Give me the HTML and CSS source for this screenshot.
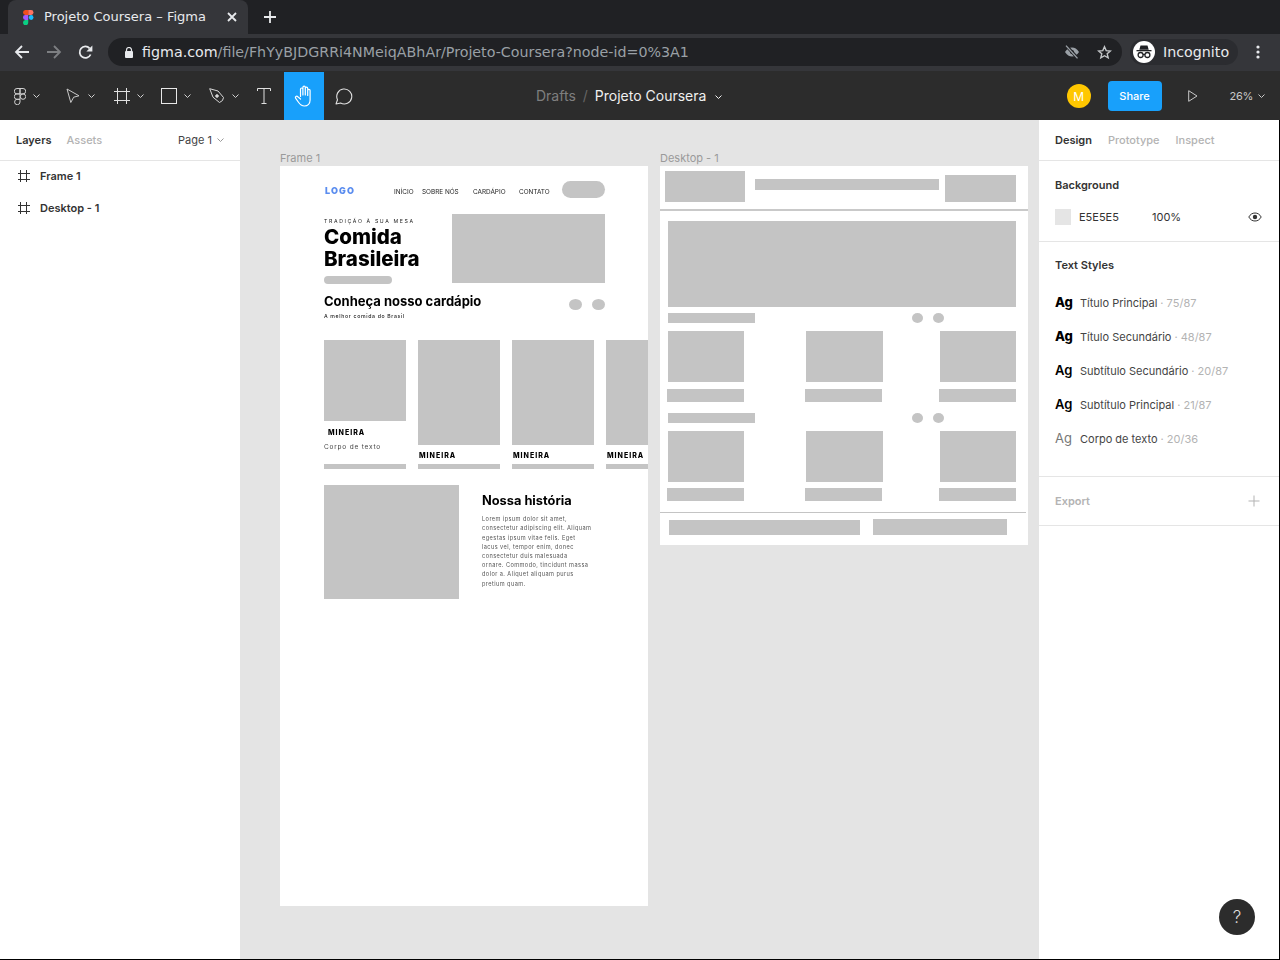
FILE: index.html
```html
<!DOCTYPE html>
<html lang="pt">
<head>
<meta charset="utf-8">
<title>Projeto Coursera – Figma</title>
<link rel="stylesheet" href="styles.css">
</head>
<body>
<div class="window">
  <header class="tabstrip">
    <div class="tab">
      <svg class="favicon" width="10.500" height="15" viewBox="0 0 12 16" preserveAspectRatio="none"><path d="M0 2.700A2.700 2.700 0 0 1 2.700 0H6v5.300H2.700A2.700 2.700 0 0 1 0 2.700z" fill="#f24e1e"/><path d="M6 0h3.300a2.650 2.650 0 0 1 0 5.300H6z" fill="#ff7262"/><path d="M0 8a2.650 2.650 0 0 1 2.700-2.700H6v5.300H2.700A2.650 2.650 0 0 1 0 8z" fill="#a259ff"/><circle cx="9.300" cy="8" r="2.650" fill="#1abcfe"/><path d="M0 13.300a2.700 2.700 0 0 1 2.700-2.700H6v2.700a3 3 0 0 1-6 0z" fill="#0acf83"/></svg>
      <span class="tab-title">Projeto Coursera – Figma</span>
      <svg class="tab-close" width="10" height="10" viewBox="0 0 10 10"><path d="M1 1l8 8M9 1l-8 8" stroke="#e8eaed" stroke-width="1.800"/></svg>
    </div>
    <svg class="new-tab" width="12" height="12" viewBox="0 0 12 12"><path d="M6 0v12M0 6h12" stroke="#e8eaed" stroke-width="1.800"/></svg>
  </header>

  <div class="chrome-bar">
    <svg class="nav-icon" width="16" height="14" viewBox="0 0 16 14"><path d="M15 7H2M8 1L2 7l6 6" fill="none" stroke="#e8eaed" stroke-width="1.800"/></svg>
    <svg class="nav-icon forward" width="16" height="14" viewBox="0 0 16 14"><path d="M1 7h13M8 1l6 6-6 6" fill="none" stroke="#7d7f82" stroke-width="1.800"/></svg>
    <svg class="nav-icon reload" width="15" height="15" viewBox="0 0 15 15"><path d="M12.600 9.500A5.700 5.700 0 1 1 11.600 3.300" fill="none" stroke="#e8eaed" stroke-width="1.800"/><path d="M14.400 0.600v6h-6z" fill="#e8eaed"/></svg>
    <div class="omnibox">
      <svg class="lock" width="8" height="11" viewBox="0 0 8 11"><path d="M1.500 4.500V3a2.500 2.500 0 0 1 5 0v1.500" fill="none" stroke="#e8eaed" stroke-width="1.200"/><rect y="4" width="8" height="7" rx="1" fill="#e8eaed"/></svg>
      <span class="url"><span class="host">figma.com</span>/file/FhYyBJDGRRi4NMeiqABhAr/Projeto-Coursera?node-id=0%3A1</span>
      <svg class="eye-off" width="16" height="14" viewBox="0 0 16 14"><path d="M1 7c2-3.300 4.300-4.600 7-4.600S13 3.700 15 7c-2 3.300-4.300 4.600-7 4.600S3 10.300 1 7z" fill="#9aa0a6"/><circle cx="8" cy="7" r="2" fill="#202124"/><path d="M2.500 1l11 12" stroke="#202124" stroke-width="3.200"/><path d="M2 .6l11.500 12.800" stroke="#9aa0a6" stroke-width="1.400"/></svg>
      <svg class="star" width="15" height="15" viewBox="0 0 15 15"><path d="M7.500 1.700l1.700 3.900 4.200.4-3.200 2.800 1 4.100-3.700-2.200-3.700 2.200 1-4.100L1.600 6l4.200-.4z" fill="none" stroke="#c4c7c9" stroke-width="1.400"/></svg>
    </div>
    <div class="incognito">
      <span class="incognito-badge">
        <svg width="16" height="14" viewBox="0 0 16 14"><path d="M4.500 0.500h7l1.200 4.300H3.300z" fill="#202124"/><rect x="0.500" y="5" width="15" height="1.300" fill="#202124"/><circle cx="4.600" cy="10" r="2.500" fill="none" stroke="#202124" stroke-width="1.300"/><circle cx="11.400" cy="10" r="2.500" fill="none" stroke="#202124" stroke-width="1.300"/><path d="M7 9.500h2" stroke="#202124" stroke-width="1.200"/></svg>
      </span>
      <span>Incognito</span>
    </div>
    <svg class="kebab" width="4" height="14" viewBox="0 0 4 14"><circle cx="2" cy="2" r="1.600" fill="#e8eaed"/><circle cx="2" cy="7" r="1.600" fill="#e8eaed"/><circle cx="2" cy="12" r="1.600" fill="#e8eaed"/></svg>
  </div>

  <div class="figma-bar">
    <div class="tools">
      <div class="tool t-main">
        <svg width="12" height="17" viewBox="0 0 12 17" fill="none" stroke="#d0d0d0" stroke-width="1"><path d="M6 .5H3a2.700 2.700 0 0 0 0 5.400h3zM6 .5h3a2.700 2.700 0 0 1 0 5.400H6zM6 5.900H3a2.700 2.700 0 0 0 0 5.400h3z"/><circle cx="9" cy="8.600" r="2.700"/><path d="M6 11.300H3a2.700 2.700 0 1 0 3 2.700z"/></svg>
        <svg class="caret" width="7" height="4" viewBox="0 0 7 4"><path d="M.5.500l3 3 3-3" fill="none" stroke="#d0d0d0"/></svg>
      </div>
      <div class="tool t-move">
        <svg width="14" height="16" viewBox="0 0 14 16"><path d="M1 1l12 6.800-5.300 1.400L4.800 14.500z" fill="none" stroke="#c8c8c8" stroke-width="1"/></svg>
        <svg class="caret caret-move" width="7" height="4" viewBox="0 0 7 4"><path d="M.5.500l3 3 3-3" fill="none" stroke="#d0d0d0"/></svg>
      </div>
      <div class="tool t-frame">
        <svg width="16" height="16" viewBox="0 0 16 16"><path d="M3.500 0v16M12.500 0v16M0 3.500h16M0 12.500h16" stroke="#e0e0e0" stroke-width="1"/></svg>
        <svg class="caret" width="7" height="4" viewBox="0 0 7 4"><path d="M.5.500l3 3 3-3" fill="none" stroke="#d0d0d0"/></svg>
      </div>
      <div class="tool t-rect">
        <svg width="16" height="16" viewBox="0 0 16 16"><rect x=".5" y=".5" width="15" height="15" fill="none" stroke="#e8e8e8"/></svg>
        <svg class="caret" width="7" height="4" viewBox="0 0 7 4"><path d="M.5.500l3 3 3-3" fill="none" stroke="#d0d0d0"/></svg>
      </div>
      <div class="tool t-pen">
        <svg width="16" height="16" viewBox="0 0 16 16" fill="none" stroke="#d8d8d8"><path d="M.7.700l8.300 2.300 5.500 6.500-1 3-3 2-6.500-5.300z"/><circle cx="8" cy="8" r="1.300" fill="#d8d8d8"/></svg>
        <svg class="caret" width="7" height="4" viewBox="0 0 7 4"><path d="M.5.500l3 3 3-3" fill="none" stroke="#d0d0d0"/></svg>
      </div>
      <div class="tool t-text">
        <svg width="14" height="16" viewBox="0 0 14 16" fill="none" stroke="#e0e0e0"><path d="M.5 3V.5h13V3M7 .5v15M4.500 15.500h5"/></svg>
      </div>
      <div class="tool t-hand">
        <svg width="20" height="22" viewBox="0 0 20 22" fill="none" stroke="#fff" stroke-width="1.200" stroke-linecap="round" stroke-linejoin="round"><path d="M6.500 11.500V4.200a1.200 1.200 0 0 1 2.400 0V10M8.900 10V2.400a1.200 1.200 0 0 1 2.400 0V10M11.300 10V3.400a1.200 1.200 0 0 1 2.400 0V10.500M13.700 10.500V5.600a1.200 1.200 0 0 1 2.400 0v9.400c0 3.500-2.400 6-5.600 6-3 0-4.500-1.400-6.200-4L1.600 13.200c-.8-1.400 1-2.600 2.200-1.500l2.700 2.300"/></svg>
      </div>
      <div class="tool t-comment">
        <svg width="18" height="17" viewBox="0 0 18 17" fill="none" stroke="#e0e0e0" stroke-width="1.100"><path d="M1 16l1.500-4.300A7.500 7.500 0 1 1 5.600 15z" stroke-linejoin="round"/></svg>
      </div>
    </div>
    <div class="crumbs">
      <span class="crumb-dim">Drafts</span>
      <span class="crumb-slash">/</span>
      <span class="crumb-name">Projeto Coursera</span>
      <svg class="crumb-caret" width="7" height="4" viewBox="0 0 7 4"><path d="M.5.500l3 3 3-3" fill="none" stroke="#f0f0f0"/></svg>
    </div>
    <div class="bar-right">
      <span class="avatar">M</span>
      <span class="share">Share</span>
      <svg class="play" width="10" height="12" viewBox="0 0 10 12"><path d="M.7.700v10.600L9 6z" fill="none" stroke="#c8c8c8"/></svg>
      <span class="zoom-label">26%</span>
      <svg class="caret zoom-caret" width="7" height="4" viewBox="0 0 7 4"><path d="M.5.500l3 3 3-3" fill="none" stroke="#c8c8c8"/></svg>
    </div>
  </div>

  <div class="workspace">
    <aside class="left-panel">
      <div class="panel-tabs left-tabs">
        <span class="tab-on">Layers</span>
        <span class="tab-off">Assets</span>
        <span class="page-select">Page 1
          <svg width="7" height="4" viewBox="0 0 7 4"><path d="M.5.500l3 3 3-3" fill="none" stroke="#999"/></svg>
        </span>
      </div>
      <ul class="layers">
        <li class="layer">
          <svg width="12" height="12" viewBox="0 0 12 12"><path d="M2.500 0v12M8.500 0v12M0 3.500h12M0 9.500h12" stroke="#333" stroke-width="1"/></svg>
          <span>Frame 1</span>
        </li>
        <li class="layer">
          <svg width="12" height="12" viewBox="0 0 12 12"><path d="M2.500 0v12M8.500 0v12M0 3.500h12M0 9.500h12" stroke="#333" stroke-width="1"/></svg>
          <span>Desktop - 1</span>
        </li>
      </ul>
    </aside>

    <main class="canvas">
      <section class="artboard artboard-a">
        <div class="art-label">Frame 1</div>
        <div class="art-a">
          <div class="a-nav">
            <span class="a-logo">LOGO</span>
            <span class="a-link">INÍCIO</span>
            <span class="a-link">SOBRE NÓS</span>
            <span class="a-link">CARDÁPIO</span>
            <span class="a-link">CONTATO</span>
            <span class="a-pill"></span>
          </div>
          <div class="a-hero">
            <div class="a-hero-text">
              <div class="a-eyebrow">TRADIÇÃO À SUA MESA</div>
              <h1 class="a-h1">Comida<br>Brasileira</h1>
              <div class="a-cta"></div>
            </div>
            <div class="ph a-hero-img"></div>
          </div>
          <div class="a-menu-head">
            <div>
              <h2 class="a-h2">Conheça nosso cardápio</h2>
              <div class="a-sub">A melhor comida do Brasil</div>
            </div>
            <div class="a-dots"><i class="a-dot"></i><i class="a-dot"></i></div>
          </div>
          <div class="a-cards">
            <article class="a-card">
              <div class="ph a-img-short"></div>
              <div class="a-name a-name-first">MINEIRA</div>
              <div class="a-body">Corpo de texto</div>
              <div class="ph a-card-bar"></div>
            </article>
            <article class="a-card">
              <div class="ph a-img-tall"></div>
              <div class="a-name">MINEIRA</div>
              <div class="ph a-card-bar"></div>
            </article>
            <article class="a-card">
              <div class="ph a-img-tall"></div>
              <div class="a-name">MINEIRA</div>
              <div class="ph a-card-bar"></div>
            </article>
            <article class="a-card">
              <div class="ph a-img-tall"></div>
              <div class="a-name">MINEIRA</div>
              <div class="ph a-card-bar"></div>
            </article>
          </div>
          <div class="a-story">
            <div class="ph a-story-img"></div>
            <div class="a-story-text">
              <h2 class="a-h3">Nossa história</h2>
              <p class="a-para">Lorem ipsum dolor sit amet,<br>consectetur adipiscing elit. Aliquam<br>egestas ipsum vitae felis. Eget<br>lacus vel, tempor enim, donec<br>consectetur duis malesuada<br>ornare. Commodo, tincidunt massa<br>dolor a. Aliquet aliquam purus<br>pretium quam.</p>
            </div>
          </div>
        </div>
      </section>

      <section class="artboard artboard-b">
        <div class="art-label">Desktop - 1</div>
        <div class="art-b">
          <div class="b-head">
            <div class="ph b-logo"></div>
            <div class="ph b-nav"></div>
            <div class="ph b-btn"></div>
          </div>
          <div class="ph b-hero"></div>
          <div class="b-title-row">
            <div class="ph b-title"></div>
            <div class="b-dots"><i class="b-dot"></i><i class="b-dot"></i></div>
          </div>
          <div class="b-grid">
            <div class="ph b-img"></div><div class="ph b-img"></div><div class="ph b-img"></div>
            <div class="ph b-label"></div><div class="ph b-label"></div><div class="ph b-label"></div>
          </div>
          <div class="b-title-row b-second">
            <div class="ph b-title"></div>
            <div class="b-dots"><i class="b-dot"></i><i class="b-dot"></i></div>
          </div>
          <div class="b-grid">
            <div class="ph b-img"></div><div class="ph b-img"></div><div class="ph b-img"></div>
            <div class="ph b-label"></div><div class="ph b-label"></div><div class="ph b-label"></div>
          </div>
          <div class="b-rule"></div>
          <div class="b-foot">
            <div class="ph b-foot-a"></div>
            <div class="ph b-foot-b"></div>
          </div>
        </div>
      </section>
    </main>

    <aside class="right-panel">
      <div class="panel-tabs right-tabs">
        <span class="tab-on">Design</span>
        <span class="tab-off">Prototype</span>
        <span class="tab-off">Inspect</span>
      </div>
      <section class="sec sec-bg">
        <h3 class="sec-title">Background</h3>
        <div class="bg-row">
          <span class="swatch"></span>
          <span class="bg-hex">E5E5E5</span>
          <span class="bg-pct">100%</span>
          <svg class="eye" width="14" height="10" viewBox="0 0 14 10"><path d="M.8 5C2.300 2.300 4.400 1 7 1s4.700 1.300 6.200 4C11.700 7.700 9.600 9 7 9S2.300 7.700.8 5z" fill="none" stroke="#333" stroke-width="1"/><circle cx="7" cy="5" r="2.200" fill="#333"/></svg>
        </div>
      </section>
      <section class="sec sec-styles">
        <h3 class="sec-title">Text Styles</h3>
        <ul class="styles">
          <li class="style"><span class="ag ag-x">Ag</span><span class="style-name">Título Principal</span><span class="style-meta">· 75/87</span></li>
          <li class="style"><span class="ag ag-x">Ag</span><span class="style-name">Título Secundário</span><span class="style-meta">· 48/87</span></li>
          <li class="style"><span class="ag ag-s">Ag</span><span class="style-name">Subtítulo Secundário</span><span class="style-meta">· 20/87</span></li>
          <li class="style"><span class="ag ag-s">Ag</span><span class="style-name">Subtítulo Principal</span><span class="style-meta">· 21/87</span></li>
          <li class="style"><span class="ag ag-r">Ag</span><span class="style-name">Corpo de texto</span><span class="style-meta">· 20/36</span></li>
        </ul>
      </section>
      <section class="sec sec-export">
        <h3 class="sec-title sec-title-off">Export</h3>
        <svg width="12" height="12" viewBox="0 0 12 12"><path d="M6 .5v11M.5 6h11" stroke="#b3b3b3"/></svg>
      </section>
      <div class="help">?</div>
    </aside>
  </div>
</div>
</body>
</html>
```
FILE: styles.css
```css
* { box-sizing: border-box; }
html, body { margin: 0; padding: 0; }
body { width: 1280px; height: 960px; overflow: hidden; background: #000; font-family: "Inter", "Liberation Sans", sans-serif; }
h1, h2, h3, p, ul { margin: 0; padding: 0; font: inherit; list-style: none; }
svg { display: block; flex: none; }
i { display: block; }

.window { width: 1280px; height: 960px; display: flex; flex-direction: column; }

/* Browser chrome */
.tabstrip { height: 34px; background: #202124; display: flex; align-items: center; padding-left: 8px; flex: none; }
.tab { width: 240px; height: 34px; background: #35363a; border-radius: 8px 8px 0 0; display: flex; align-items: center; padding-left: 15px; color: #e8eaed; font: 13px "DejaVu Sans", sans-serif; }
.favicon { margin-right: 10.500px; }
.tab-title { width: 183px; white-space: nowrap; margin-top: -2px; }
.new-tab { margin-left: 16px; }

.chrome-bar { height: 37px; background: #35363a; display: flex; align-items: center; flex: none; padding: 0 0 1px 14px; }
.forward { margin-left: 16px; }
.reload { margin-left: 16px; }
.omnibox { width: 1014px; margin-left: 15px; height: 28px; border-radius: 14px; background: #202124; display: flex; align-items: center; padding-left: 17px; }
.url { margin-left: 9px; width: 922px; font: 14.250px "DejaVu Sans", sans-serif; color: #9aa0a6; white-space: nowrap; }
.host { color: #e8eaed; }
.star { margin-left: 17px; }
.incognito { margin-left: 8px; height: 26px; width: 108px; border-radius: 13px; background: #2b2c30; display: flex; align-items: center; padding-left: 3px; color: #e8eaed; font: 14.250px "DejaVu Sans", sans-serif; }
.incognito-badge { width: 22px; height: 22px; border-radius: 50%; background: #fff; display: flex; align-items: center; justify-content: center; margin-right: 8px; }
.kebab { margin-left: 18px; }

/* Figma toolbar */
.figma-bar { height: 49px; background: #2c2c2c; display: flex; align-items: center; position: relative; flex: none; padding-top: 1px; }
.tools { display: flex; align-items: center; height: 48px; }
.tool { height: 48px; display: flex; align-items: center; }
.caret { margin-left: 7px; }
.caret-move { margin-left: 8px; }
.zoom-caret { margin-left: 5px; }
.t-main { width: 53px; padding-left: 14px; }
.t-move { width: 61px; padding-left: 13px; }
.t-frame { width: 47px; }
.t-rect { width: 48px; }
.t-pen { width: 48px; }
.t-text { width: 27px; }
.t-hand { width: 40px; background: #18a0fb; justify-content: center; }
.t-comment { width: 40px; justify-content: center; }
.crumbs { position: absolute; left: 536px; top: 15px; display: flex; align-items: center; font-size: 14px; height: 18px; }
.crumb-dim { color: #7f7f7f; }
.crumb-slash { color: #666; margin: 0 7px; }
.crumb-name { color: #f0f0f0; }
.crumb-caret { margin-left: 9px; margin-top: 4px; }
.bar-right { margin-left: auto; display: flex; align-items: center; padding-right: 15px; }
.avatar { width: 24px; height: 24px; border-radius: 50%; background: #ffc700; color: #fff; font-size: 12px; display: flex; align-items: center; justify-content: center; }
.share { margin-left: 17px; width: 54px; height: 30px; background: #18a0fb; border-radius: 4px; color: #fff; font-size: 11px; font-weight: 500; display: flex; align-items: center; justify-content: center; }
.play { margin-left: 26px; }
.zoom-label { margin-left: 32px; font-size: 11px; letter-spacing: -.3px; color: #c8c8c8; }

/* Workspace */
.workspace { flex: 1; display: flex; margin-bottom: 1px; min-height: 0; }
.left-panel { width: 240px; background: #fff; flex: none; }
.right-panel { width: 241px; flex: none; background: #fff; border-right: 1px solid #000; position: relative; }
.canvas { flex: 1; background: #e4e4e4; position: relative; overflow: hidden; }

.panel-tabs { height: 41px; border-bottom: 1px solid #e5e5e5; display: flex; align-items: center; font-size: 11px; }
.tab-on { color: #333; font-weight: 600; }
.tab-off { color: #b3b3b3; font-weight: 500; }
.left-tabs { padding: 0 16px; gap: 15px; }
.right-tabs { padding: 0 16px; gap: 16px; }
.page-select { margin-left: auto; display: flex; align-items: center; gap: 5px; color: #444; font-weight: 400; }
.layers { margin-top: -1px; }
.layer { height: 32px; display: flex; align-items: center; gap: 10px; padding-left: 18px; font-size: 11px; font-weight: 600; color: #333; }

.sec { border-bottom: 1px solid #e5e5e5; padding: 0 16px; }
.sec-title { font-size: 11px; font-weight: 600; color: #333; line-height: 16px; }
.sec-title-off { color: #b3b3b3; }
.sec-bg { height: 81px; padding-top: 16px; }
.bg-row { display: flex; align-items: center; height: 16px; margin-top: 16px; font-size: 11px; color: #333; }
.swatch { width: 16px; height: 16px; background: #e5e5e5; }
.bg-hex { margin-left: 8px; width: 73px; }
.eye { margin-left: auto; margin-right: 1px; }
.sec-styles { height: 235px; padding-top: 15px; }
.styles { margin-top: 13px; }
.style { height: 34px; display: flex; align-items: center; font-size: 11px; color: #444; white-space: nowrap; }
.ag { width: 25px; color: #000; font-size: 13px; margin-top: -3px; }
.ag-x { font-weight: 800; }
.ag-s { font-weight: 600; }
.ag-r { color: #777; font-weight: 400; }
.style-meta { color: #b3b3b3; margin-left: 3px; }
.sec-export { height: 49px; display: flex; align-items: center; justify-content: space-between; padding-right: 19px; }
.help { position: absolute; left: 180px; bottom: 24px; width: 36px; height: 36px; border-radius: 50%; background: #2c2c2c; color: #ddd; display: flex; align-items: center; justify-content: center; font-size: 17px; font-weight: 300; }

/* Free canvas artboards */
.artboard { position: absolute; }
.artboard-a { left: 40px; top: 31px; width: 368px; }
.artboard-b { left: 420px; top: 31px; width: 367.500px; }
.art-label { height: 15px; font-size: 11px; line-height: 15px; color: #9a9a9a; }
.ph { background: #c4c4c4; }

/* Frame 1 */
.art-a { height: 739.500px; background: #fff; overflow: hidden; padding-left: 44px; color: #000; filter: blur(.3px); }
.a-nav { display: grid; grid-template-columns: 70px 28px 51px 46px 43px 42.500px; height: 17px; margin-top: 15px; align-items: center; }
.a-logo { font-size: 9px; font-weight: 900; color: #5b8def; letter-spacing: 1.100px; padding: 1px 0 0 1px; }
.a-link { font-size: 6.400px; color: #222; white-space: nowrap; padding-top: 5px; }
.a-pill { width: 42.500px; height: 17px; border-radius: 9px; background: #c4c4c4; }
.a-hero { display: grid; grid-template-columns: 127.500px 153px; margin-top: 16px; height: 69.700px; }
.a-hero-img { height: 68.500px; }
.a-eyebrow { font-size: 5.200px; letter-spacing: 1.630px; color: #222; line-height: 6px; margin-top: 3.500px; white-space: nowrap; }
.a-h1 { font-size: 20.500px; font-weight: 800; line-height: 22px; margin-top: 2.500px; }
.a-cta { width: 67.500px; height: 8.700px; border-radius: 4.500px; background: #c4c4c4; margin-top: 5.500px; }
.a-menu-head { display: flex; width: 280.500px; margin-top: 9px; justify-content: space-between; }
.a-h2 { font-size: 13px; font-weight: 700; line-height: 16px; white-space: nowrap; }
.a-sub { font-size: 5.200px; font-weight: 500; line-height: 7px; margin-top: 4px; letter-spacing: .65px; color: #222; }
.a-dots { display: flex; gap: 9.500px; margin-top: 6px; }
.a-dot { width: 13px; height: 11px; border-radius: 50%; background: #c4c4c4; }
.a-cards { display: flex; gap: 12.500px; margin-top: 20.500px; height: 129px; width: 400px; }
.a-card { width: 81.500px; flex: none; display: flex; flex-direction: column; }
.a-img-short { height: 81px; }
.a-img-tall { height: 105px; }
.a-name { font-size: 7px; font-weight: 800; letter-spacing: 1px; line-height: 10px; margin-top: 6px; padding-left: 1px; }
.a-name-first { margin-top: 7px; padding-left: 4px; }
.a-body { font-size: 6.500px; letter-spacing: .8px; color: #444; line-height: 10px; margin-top: 4px; white-space: nowrap; }
.a-card-bar { height: 5.500px; margin-top: auto; }
.a-story { display: flex; margin-top: 16px; }
.a-story-img { width: 135px; height: 114px; }
.a-story-text { margin-left: 23px; }
.a-h3 { font-size: 12.800px; font-weight: 700; line-height: 16px; margin-top: 8px; white-space: nowrap; }
.a-para { font-size: 5.600px; line-height: 9.200px; color: #555; margin-top: 6px; white-space: nowrap; letter-spacing: .43px; }

/* Desktop - 1 */
.art-b { height: 378.500px; background: #fff; overflow: hidden; filter: blur(.3px); }
.b-head { height: 45px; border-bottom: 2px solid #c9c9c9; display: flex; align-items: flex-start; padding-left: 5px; }
.b-logo { width: 80px; height: 31px; margin-top: 5px; }
.b-nav { width: 184px; height: 11px; margin: 12.500px 0 0 10px; }
.b-btn { width: 71px; height: 27px; margin: 9px 0 0 6px; }
.b-hero { width: 348.500px; height: 86px; margin: 10px 0 0 7.500px; }
.b-title-row { display: flex; height: 10px; margin: 6px 0 0 8px; }
.b-second { margin-top: 11px; }
.b-title { width: 87px; height: 10px; }
.b-dots { display: flex; gap: 10px; margin-left: 157px; }
.b-dot { width: 11px; height: 10px; border-radius: 50%; background: #c4c4c4; }
.b-grid { display: grid; grid-template-columns: 138.500px 133.500px 76.500px; grid-template-rows: 51px 13px; row-gap: 6.500px; margin: 8px 0 0 7.500px; }
.b-img, .b-label { width: 76.500px; }
.b-label { margin-left: -.5px; }
.b-label:nth-child(5) { margin-left: -1px; }
.b-rule { height: 1px; width: 365.500px; background: #c4c4c4; margin-top: 11px; }
.b-foot { display: flex; align-items: flex-end; height: 22px; padding-left: 8.500px; gap: 12.500px; }
.b-foot-a { width: 191.500px; height: 15.500px; }
.b-foot-b { width: 134.500px; height: 16.500px; }
```
